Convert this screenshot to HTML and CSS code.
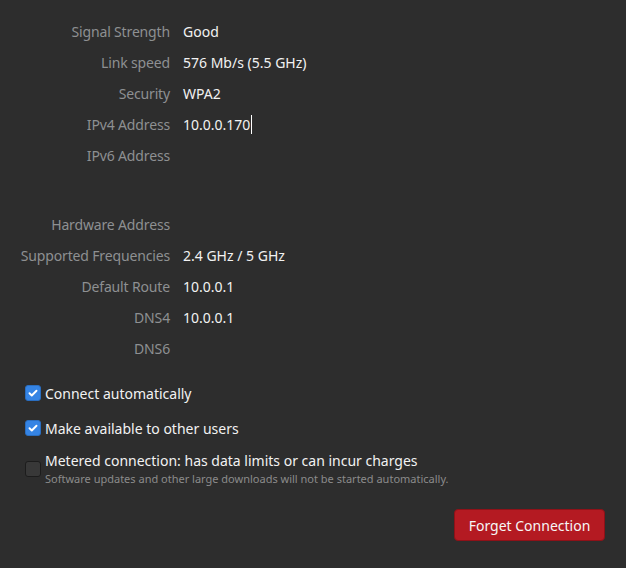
FILE: index.html
```html
<!DOCTYPE html>
<html>
<head>
<meta charset="utf-8">
<link rel="stylesheet" href="styles.css">
</head>
<body>
<div class="page">
  <div class="details">
    <div class="label">Signal Strength</div><div class="value">Good</div>
    <div class="label">Link speed</div><div class="value">576 Mb/s (5.5 GHz)</div>
    <div class="label">Security</div><div class="value">WPA2</div>
    <div class="label">IPv4 Address</div><div class="value"><span class="caret">10.0.0.170</span></div>
    <div class="label">IPv6 Address</div><div class="value"></div>
    <div class="spacer"></div>
    <div class="label">Hardware Address</div><div class="value"></div>
    <div class="label">Supported Frequencies</div><div class="value">2.4 GHz / 5 GHz</div>
    <div class="label">Default Route</div><div class="value">10.0.0.1</div>
    <div class="label">DNS4</div><div class="value">10.0.0.1</div>
    <div class="label">DNS6</div><div class="value"></div>
  </div>

  <div class="options">
    <label class="check">
      <span class="box checked"><svg viewBox="0 0 16 16" width="16" height="16"><path d="M4 8.3l2.6 2.5L12 5.4" fill="none" stroke="#fff" stroke-width="2.2" stroke-linecap="round" stroke-linejoin="round"/></svg></span>
      <span class="text">Connect automatically</span>
    </label>
    <label class="check">
      <span class="box checked"><svg viewBox="0 0 16 16" width="16" height="16"><path d="M4 8.3l2.6 2.5L12 5.4" fill="none" stroke="#fff" stroke-width="2.2" stroke-linecap="round" stroke-linejoin="round"/></svg></span>
      <span class="text">Make available to other users</span>
    </label>
    <label class="check metered">
      <span class="box"></span>
      <span class="stack">
        <span class="text">Metered connection: has data limits or can incur charges</span>
        <span class="sub">Software updates and other large downloads will not be started automatically.</span>
      </span>
    </label>
  </div>

  <div class="actions">
    <button class="forget">Forget Connection</button>
  </div>
</div>
</body>
</html>
```

FILE: styles.css
```css
html, body {
  margin: 0;
  padding: 0;
  background: #2d2d2d;
}
body {
  width: 626px;
  height: 568px;
  overflow: hidden;
  font-family: "Noto Sans", "Open Sans", sans-serif;
  font-size: 14px;
  color: #eeeeec;
}
.page {
  padding-top: 16px;
}
.details {
  display: grid;
  grid-template-columns: 170px 1fr;
  column-gap: 13px;
}
.label,
.value {
  line-height: 31px;
  height: 31px;
  white-space: nowrap;
}
.label {
  text-align: right;
  color: #8e9092;
  letter-spacing: -0.15px;
}
.value {
  color: #f2f2f2;
}
.caret {
  border-right: 1px solid #ffffff;
  padding-right: 1px;
}
.spacer {
  grid-column: 1 / 3;
  height: 38px;
}
.options {
  display: flex;
  flex-direction: column;
  padding-left: 25px;
  margin-top: 19px;
  gap: 15px;
}
.check {
  display: flex;
  align-items: center;
  gap: 4px;
  height: 20px;
}
.check.metered {
  height: auto;
  margin-top: -2px;
}
.box {
  width: 16px;
  height: 16px;
  box-sizing: border-box;
  border-radius: 3px;
  background: #383838;
  border: 1px solid #1c1c1c;
  display: flex;
  align-items: center;
  justify-content: center;
  flex: none;
}
.box.checked {
  background: #3584e4;
  border-color: #2a6ec0;
}
.box svg { display: block; }
.stack {
  display: flex;
  flex-direction: column;
}
.text {
  color: #f2f2f2;
}
.sub {
  font-size: 11px;
  color: #8b8b8b;
  line-height: 14px;
  margin-top: 2px;
}
.actions {
  display: flex;
  justify-content: flex-end;
  padding-right: 21px;
  margin-top: 23px;
}
.forget {
  font-family: inherit;
  font-size: 14px;
  color: #f6f6f6;
  background: #b41a22;
  border: 1px solid #8e1118;
  border-radius: 4px;
  width: 151px;
  height: 32px;
  padding: 0;
}
```
